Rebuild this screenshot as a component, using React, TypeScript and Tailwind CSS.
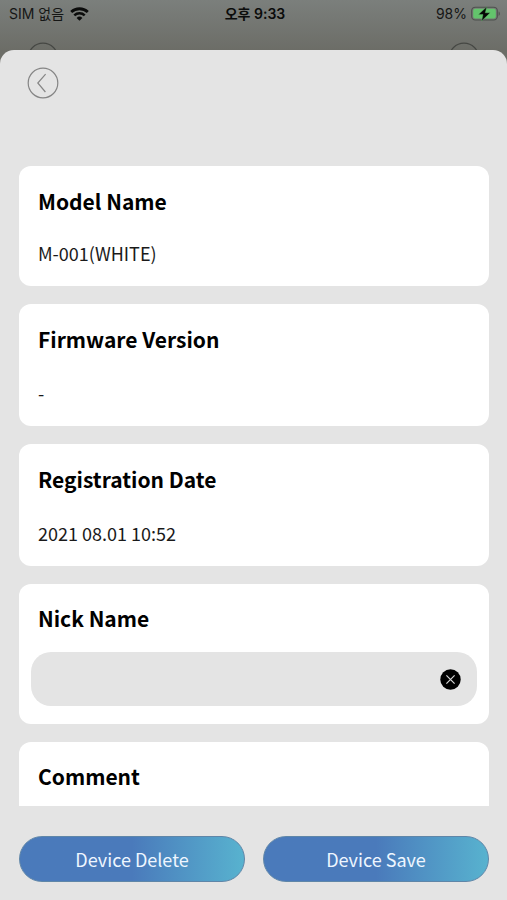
import { useState, type ReactNode } from "react";

interface InfoCardProps {
  title: string;
  value: string;
  compact?: boolean;
}

interface FieldCardProps {
  id: string;
  title: string;
  children: ReactNode;
}

function WifiIcon() {
  return (
    <svg width="19" height="14" viewBox="0 0 19 14" fill="none" aria-hidden="true">
      <path d="M1.2 5.1a12 12 0 0 1 16.6 0" stroke="#0b0c0b" strokeWidth="2.8" />
      <path d="M4.3 8.4a7.5 7.5 0 0 1 10.4 0" stroke="#0b0c0b" strokeWidth="2.5" />
      <path d="M9.5 13.8 6.6 10.9a4.2 4.2 0 0 1 5.8 0z" fill="#0b0c0b" />
    </svg>
  );
}

function BatteryIcon() {
  return (
    <svg width="30" height="16" viewBox="0 0 30 16" aria-hidden="true">
      <rect x="0.7" y="1.2" width="25.6" height="12.8" rx="3.6" fill="none" stroke="#4d504d" strokeWidth="1.1" />
      <rect x="2.2" y="2.7" width="22.6" height="9.8" rx="2" fill="#63c46c" />
      <path d="M27.6 5.5c1.6.4 1.6 4 0 4.4z" fill="#4d504d" />
      <path
        d="M15.8.8 7.4 8.6h4.6L10.6 15 19.2 6.8h-4.9z"
        fill="#050605"
        stroke="#63c46c"
        strokeWidth="0.4"
      />
    </svg>
  );
}

function CircleIcon({ arrow = false, color }: { arrow?: boolean; color: string }) {
  return (
    <svg width="32" height="32" viewBox="0 0 32 32" fill="none" stroke={color} strokeWidth="1.2" aria-hidden="true">
      <circle cx="16" cy="16" r="14.8" />
      {arrow && <path d="M18.6 7.2 10.8 16l7.6 9" />}
    </svg>
  );
}

function StatusBar() {
  return (
    <div className="grid h-7 grid-cols-3 items-center pl-[9px] pr-[6px] font-['Inter','Noto_Sans_CJK_KR',sans-serif] text-sm text-[#151615]">
      <div className="flex items-center gap-[6px]">
        <span>SIM 없음</span>
        <WifiIcon />
      </div>
      <span className="text-center font-semibold text-[#0b0c0b]">오후 9:33</span>
      <div className="flex items-center justify-end gap-1">
        <span>98%</span>
        <BatteryIcon />
      </div>
    </div>
  );
}

function InfoCard({ title, value, compact = false }: InfoCardProps) {
  return (
    <section
      className={`flex shrink-0 flex-col rounded-xl bg-white px-[19px] pt-[19px] pb-[19px] ${
        compact ? "gap-[22px]" : "gap-6"
      }`}
    >
      <h2 className="text-[21px] leading-8 font-bold text-black">{title}</h2>
      <p className="text-lg leading-7 text-[#1a1a1a]">{value}</p>
    </section>
  );
}

function FieldCard({ id, title, children }: FieldCardProps) {
  return (
    <section className="flex shrink-0 flex-col gap-[18px] rounded-xl bg-white px-3 py-[18px]">
      <label htmlFor={id} className="px-[7px] text-[21px] leading-8 font-bold text-black">
        {title}
      </label>
      {children}
    </section>
  );
}

function ActionButton({ children }: { children: ReactNode }) {
  return (
    <button
      type="button"
      className="h-[46px] flex-1 rounded-full border border-[#5f86a8] bg-linear-to-r from-[#4a7abb] from-50% to-[#58b3cf] bg-origin-border text-lg text-[#eef6ff]"
    >
      {children}
    </button>
  );
}

export default function App() {
  const [nickName, setNickName] = useState("");
  const [comment, setComment] = useState("");

  return (
    <div className="flex h-screen flex-col bg-[linear-gradient(#7b7f7c,#6c6d67_50px,#6c6d67)] font-['Noto_Sans_CJK_KR',sans-serif]">
      <StatusBar />

      {/* header of the page behind the sheet */}
      <div className="flex h-[22px] justify-between overflow-hidden px-[27px] pt-[14px]">
        <CircleIcon color="#454743" />
        <CircleIcon color="#454743" />
      </div>

      <main className="flex min-h-0 flex-1 flex-col rounded-t-[14px] bg-[#e4e4e4]">
        <header className="px-[27px] pt-[17px] pb-[67px]">
          <button type="button" aria-label="Back" className="block">
            <CircleIcon arrow color="#858585" />
          </button>
        </header>

        <div className="flex min-h-0 flex-1 flex-col gap-[18px] overflow-y-auto pr-[18px] pl-[19px] [scrollbar-width:none]">
          <InfoCard title="Model Name" value="M-001(WHITE)" compact />
          <InfoCard title="Firmware Version" value="-" />
          <InfoCard title="Registration Date" value="2021 08.01 10:52" />

          <FieldCard id="nick-name" title="Nick Name">
            <div className="flex h-[54px] items-center rounded-[20px] bg-[#e4e4e4] px-4">
              <input
                id="nick-name"
                type="text"
                value={nickName}
                onChange={(e) => setNickName(e.target.value)}
                className="min-w-0 flex-1 bg-transparent text-lg outline-none"
              />
              <button type="button" aria-label="Clear" onClick={() => setNickName("")}>
                <svg width="21" height="21" viewBox="0 0 21 21" aria-hidden="true">
                  <circle cx="10.5" cy="10.5" r="10.2" fill="#000" />
                  <path d="m6.4 6.4 8.2 8.2m0-8.2-8.2 8.2" stroke="#d4d4d4" strokeWidth="1.2" />
                </svg>
              </button>
            </div>
          </FieldCard>

          <FieldCard id="comment" title="Comment">
            <textarea
              id="comment"
              rows={3}
              value={comment}
              onChange={(e) => setComment(e.target.value)}
              className="resize-none rounded-[20px] bg-[#e4e4e4] px-4 py-3 text-lg outline-none"
            />
          </FieldCard>
        </div>

        <footer className="flex gap-[18px] pt-[30px] pr-[18px] pb-[18px] pl-[19px]">
          <ActionButton>Device Delete</ActionButton>
          <ActionButton>Device Save</ActionButton>
        </footer>
      </main>
    </div>
  );
}
